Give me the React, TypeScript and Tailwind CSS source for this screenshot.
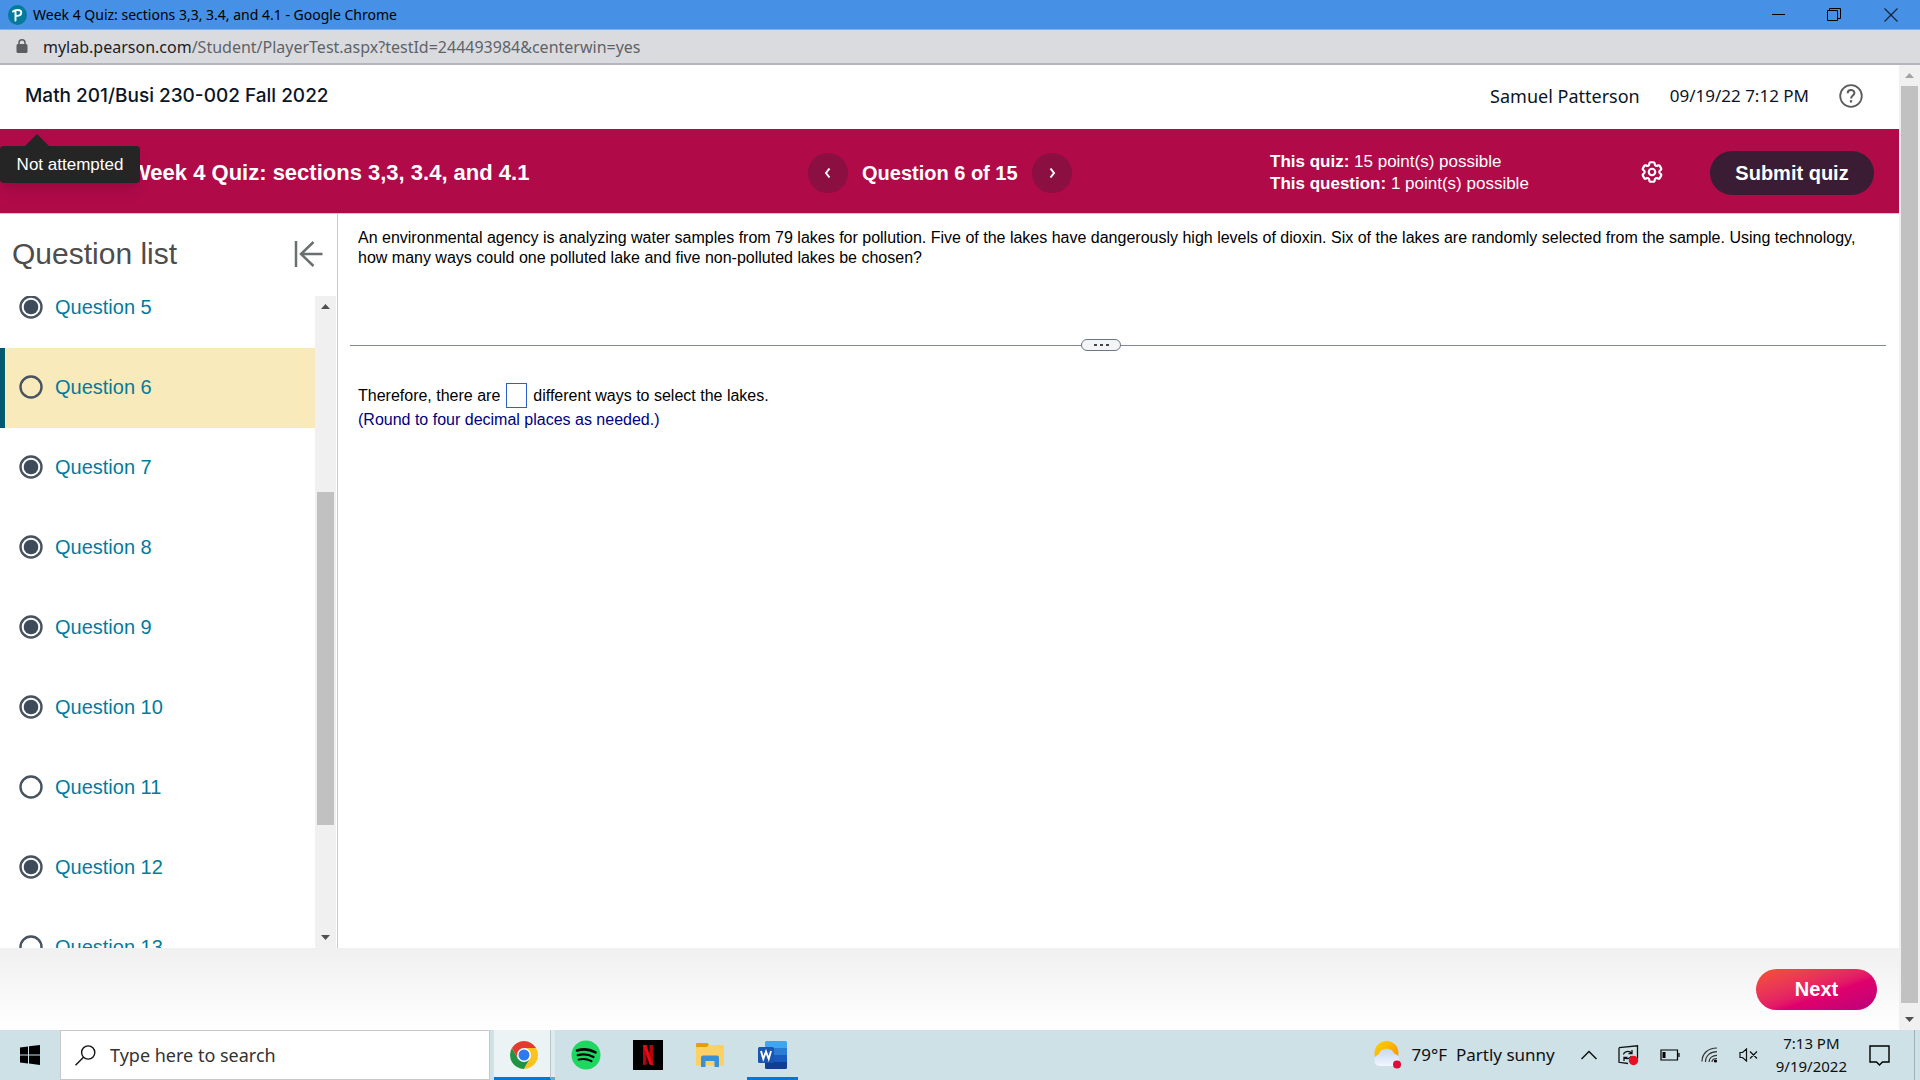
import clsx from "clsx";
import { HiOutlineCog6Tooth } from "react-icons/hi2";

const questions = [
    { number: 5, answered: true },
    { number: 6, answered: false },
    { number: 7, answered: true },
    { number: 8, answered: true },
    { number: 9, answered: true },
    { number: 10, answered: true },
    { number: 11, answered: false },
    { number: 12, answered: true },
    { number: 13, answered: false },
];

const current = 6;

function TitleBar() {
    return (
        <header className="flex h-[30px] shrink-0 items-center justify-between border-b border-[#a5a8ae] bg-[#4690e6] pl-2">
            <div className="flex items-center gap-1.5">
                <svg width="19" height="20" viewBox="0 0 19 20">
                    <ellipse cx="9.5" cy="10" rx="9.5" ry="10" fill="#047a9c" />
                    <path d="M7.5 15.5V6.5M5 6.5C7 4.6 13.3 4 13.3 7.6c0 2.6-2.6 3.5-4.6 3.2" fill="none" stroke="#fff" strokeWidth="1.9" strokeLinecap="round" />
                </svg>
                <h1 className="text-sm text-black">Week 4 Quiz: sections 3,3, 3.4, and 4.1 - Google Chrome</h1>
            </div>
            <div className="flex">
                <button aria-label="Minimize" className="flex h-7 w-14 items-center justify-center">
                    <svg width="13" height="13" viewBox="0 0 13 13"><path d="M0 6.5h13" stroke="#000" /></svg>
                </button>
                <button aria-label="Restore" className="flex h-7 w-14 items-center justify-center">
                    <svg width="14" height="13" viewBox="0 0 14 13" fill="none" stroke="#000">
                        <path d="M.5 2.5h10v10H.5zM2.5 2.5v-2h11v10h-3" />
                    </svg>
                </button>
                <button aria-label="Close" className="flex h-7 w-[58px] items-center justify-center">
                    <svg width="14" height="14" viewBox="0 0 14 14"><path d="M.5.5l13 13M13.5.5l-13 13" stroke="#12233a" strokeWidth="1.2" /></svg>
                </button>
            </div>
        </header>
    );
}

function AddressBar() {
    return (
        <div className="flex h-[35px] shrink-0 items-center gap-[15px] border-b-2 border-[#b4b6bf] bg-[#dadbdf] pl-4">
            <svg width="12" height="15" viewBox="0 0 12 15">
                <rect x="0.5" y="5" width="11" height="9" rx="1.5" fill="#5a5d61" />
                <path d="M3 6V3.8a3 3 0 0 1 6 0V6" fill="none" stroke="#5a5d61" strokeWidth="1.5" />
            </svg>
            <p className="text-base text-[#5f6368]">
                <span className="text-[#202124]">mylab.pearson.com</span>/Student/PlayerTest.aspx?testId=244493984&amp;centerwin=yes
            </p>
        </div>
    );
}

function CourseHeader() {
    return (
        <div className="flex h-16 shrink-0 items-center justify-between pr-9 pb-0.5 pl-[25px] text-[#0b1526]">
            <h2 className="font-['Inter',sans-serif] text-[19px] font-medium">Math 201/Busi 230-002 Fall 2022</h2>
            <div className="flex items-center gap-[30px]">
                <span className="text-lg">Samuel Patterson</span>
                <span className="text-[17px]">09/19/22 7:12 PM</span>
                <button aria-label="Help">
                    <svg width="24" height="24" viewBox="0 0 24 24" fill="none" stroke="#5b5b5b">
                        <circle cx="12" cy="12" r="10.8" strokeWidth="1.8" />
                        <path d="M8.7 9.3c0-4.2 6.7-4.2 6.7-.3 0 2.5-3.3 2.5-3.3 5.4" strokeWidth="2" />
                        <path d="M12 16.2v2.3" strokeWidth="2.3" />
                    </svg>
                </button>
            </div>
        </div>
    );
}

function StepButton({ label, path }: { label: string; path: string }) {
    return (
        <button aria-label={label} className="flex h-10 w-10 items-center justify-center rounded-full bg-[#8b0f41]">
            <svg width="10" height="12" viewBox="0 0 10 12" fill="none" stroke="#fff" strokeWidth="2">
                <path d={path} />
            </svg>
        </button>
    );
}

function QuizBar() {
    return (
        <div className="relative grid h-[85px] shrink-0 grid-cols-[808fr_462fr_629fr] items-center border-b border-[#d0c4d0] bg-[#b00a49] pt-[3px] text-white">
            <h2 className="pl-[130px] text-[22px] font-bold">Week 4 Quiz: sections 3,3, 3.4, and 4.1</h2>
            <div className="flex items-center gap-3.5">
                <StepButton label="Previous question" path="M6.5 1.5L3 6l3.5 4.5" />
                <span className="text-xl font-bold">Question 6 of 15</span>
                <StepButton label="Next question" path="M3.5 1.5L7 6l-3.5 4.5" />
            </div>
            <div className="flex items-center justify-between pr-[25px]">
                <div className="text-[17px] leading-[22px]">
                    <p><b>This quiz:</b> 15 point(s) possible</p>
                    <p><b>This question:</b> 1 point(s) possible</p>
                </div>
                <div className="flex items-center gap-[45px]">
                    <button aria-label="Settings" className="pb-0.5">
                        <HiOutlineCog6Tooth className="h-[26px] w-[26px] stroke-2" />
                    </button>
                    <button className="h-11 w-[164px] rounded-[22px] bg-[#3a1d35] text-xl font-bold">Submit quiz</button>
                </div>
            </div>

            {/* tooltip for the question status icon */}
            <div role="tooltip" className="absolute top-[5px] left-0">
                <svg className="ml-[25px] block" width="24" height="12" viewBox="0 0 24 12">
                    <path d="M12 0l12 12H0z" fill="#252525" />
                </svg>
                <div className="flex h-[37px] w-[140px] items-center justify-center rounded bg-[#252525] text-[17px] shadow-lg">
                    Not attempted
                </div>
            </div>
        </div>
    );
}

function StatusIcon({ answered }: { answered: boolean }) {
    return (
        <svg width="24" height="24" viewBox="0 0 24 24">
            <circle cx="12" cy="12" r="10.5" fill="none" stroke="#47535f" strokeWidth="2.4" />
            {answered && <circle cx="12" cy="12" r="7.3" fill="#3d4b5a" />}
        </svg>
    );
}

function ScrollArrow({ up, color }: { up?: boolean; color: string }) {
    return (
        <svg className="shrink-0" width="21" height="21" viewBox="0 0 21 21">
            <path d={up ? "M6 13l4.5-5 4.500 5z" : "M6 8l4.5 5 4.500-5z"} fill={color} />
        </svg>
    );
}

function QuestionList() {
    return (
        <aside className="flex w-[338px] shrink-0 flex-col border-r border-[#c9c9d4]">
            <div className="flex h-[82px] shrink-0 items-center justify-between pr-[14px] pb-0.5 pl-3">
                <h2 className="text-3xl text-[#4d4d4d]">Question list</h2>
                <button aria-label="Collapse question list">
                    <svg width="29" height="26" viewBox="0 0 29 26" fill="none" stroke="#6a7070" strokeWidth="2.5">
                        <path d="M2 0v26M28.500 13H7M19.500 1L7 13l12.500 12" />
                    </svg>
                </button>
            </div>
            <div className="flex min-h-0 grow">
                <ul className="min-h-0 grow overflow-hidden">
                    {questions.map((q, i) => (
                        <li
                            key={q.number}
                            className={clsx(
                                "flex h-20 items-center gap-3 border-l-[5px] pb-0.5 pl-3.5",
                                i === 0 && "-mt-7",
                                q.number === current ? "border-[#005a70] bg-[#f8eabb]" : "border-transparent"
                            )}
                        >
                            <StatusIcon answered={q.answered} />
                            <a href={`#question-${q.number}`} className="text-xl text-[#047a9c]">
                                Question {q.number}
                            </a>
                        </li>
                    ))}
                </ul>
                <div className="mr-px flex w-[21px] shrink-0 flex-col items-center bg-[#f0f0f0]">
                    <ScrollArrow up color="#505050" />
                    <div className="flex w-[17px] grow flex-col">
                        <div className="grow-[175]" />
                        <div className="grow-[333] bg-[#c1c1c1]" />
                        <div className="grow-[102]" />
                    </div>
                    <ScrollArrow color="#505050" />
                </div>
            </div>
        </aside>
    );
}

function QuestionBody() {
    return (
        <main className="min-w-0 grow pt-3.5 pr-[13px] pl-3 text-base leading-5 text-black">
            <p className="min-h-[111px] pr-2 pl-2">
                An environmental agency is analyzing water samples from 79 lakes for pollution. Five of the lakes have dangerously
                high levels of dioxin. Six of the lakes are randomly selected from the sample. Using technology, how many ways
                could one polluted lake and five non-polluted lakes be chosen?
            </p>
            <div className="flex h-3 items-center">
                <div className="h-px grow-[731] bg-[#8087a0]" />
                <button aria-label="Resize panels" className="flex h-3 w-10 items-center justify-center gap-[3px] rounded-full border border-[#6a7788] bg-[#f3f4f6]">
                    <span className="h-0.5 w-[3px] bg-[#444]" />
                    <span className="h-0.5 w-[3px] bg-[#444]" />
                    <span className="h-0.5 w-[3px] bg-[#444]" />
                </button>
                <div className="h-px grow-[764] bg-[#8087a0]" />
            </div>
            <div className="pt-8 pl-2">
                <label className="flex items-center gap-1.5">
                    Therefore, there are
                    <input type="text" aria-label="Number of ways" className="h-[25px] w-[21px] border border-[#2a63c8] bg-white" />
                    different ways to select the lakes.
                </label>
                <p className="pt-0.5 text-[#000080]">(Round to four decimal places as needed.)</p>
            </div>
        </main>
    );
}

function PageScrollbar() {
    return (
        <div className="flex w-[21px] shrink-0 flex-col items-center bg-[#f0f0f0]">
            <ScrollArrow up color="#a3a3a3" />
            <div className="flex w-[17px] grow flex-col">
                <div className="grow-[917] bg-[#c1c1c1]" />
                <div className="grow-[6]" />
            </div>
            <ScrollArrow color="#505050" />
        </div>
    );
}

function ChromeIcon() {
    return (
        <svg width="28" height="28" viewBox="0 0 28 28">
            <path d="M1.9 7A14 14 0 0 0 14 28l6.1-10.5L14 14 7.9 17.5z" fill="#229342" />
            <path d="M14 7h12.1A14 14 0 0 1 14 28l6.1-10.5z" fill="#fcc31e" />
            <path d="M1.9 7A14 14 0 0 1 26.1 7H14L7.9 17.500z" fill="#e33b2e" />
            <circle cx="14" cy="14" r="7" fill="#fff" />
            <circle cx="14" cy="14" r="5.5" fill="#2f78f0" />
        </svg>
    );
}

function SpotifyIcon() {
    return (
        <svg width="30" height="30" viewBox="0 0 30 30" fill="none" stroke="#000" strokeLinecap="round">
            <circle cx="15" cy="15" r="14.5" fill="#1ed760" stroke="none" />
            <path d="M6 10.5c6-1.8 13-1.2 18.5 1.8" strokeWidth="2.6" />
            <path d="M6.8 15.2c5.5-1.5 11-.8 15.7 1.8" strokeWidth="2.3" />
            <path d="M7.5 19.6c4.5-1.1 9-.5 13 1.6" strokeWidth="1.9" />
        </svg>
    );
}

function NetflixIcon() {
    return (
        <svg width="30" height="30" viewBox="0 0 30 30">
            <rect width="30" height="30" />
            <path d="M10 5h3.5v19.5L10 25zM16.5 5H20v20l-3.5-.5z" fill="#b1060f" />
            <path d="M10 5h3.5L20 25l-3.5-.5z" fill="#e50914" />
        </svg>
    );
}

function FolderIcon() {
    return (
        <svg width="28" height="24" viewBox="0 0 28 24">
            <path d="M0 1.2Q0 0 1.2 0H11.5L13 1.5 11.5 4H0z" fill="#e2a00f" />
            <path d="M0 4h11l2-2h13.8Q28 2 28 3.2V22.5H0z" fill="#fdd063" />
            <path d="M5 24V14.5Q5 12.5 7 12.5H21Q23 12.5 23 14.5V24H18.5V18h-9v6z" fill="#3a8fd8" />
        </svg>
    );
}

function WordIcon() {
    return (
        <svg width="30" height="28" viewBox="0 0 30 28">
            <path d="M7 1.5Q7 0 8.5 0h19Q29 0 29 1.5V7H7z" fill="#41a5ee" />
            <path d="M7 7h22v7H7z" fill="#2b7cd3" />
            <path d="M7 14h22v7H7z" fill="#185abd" />
            <path d="M7 21h22v5.5q0 1.5-1.5 1.5h-19Q7 28 7 26.5z" fill="#103f91" />
            <rect y="6" width="16" height="16" rx="1.5" fill="#1a55b0" />
            <path d="M3 10l2.3 8L8 10.5 10.7 18 13 10" fill="none" stroke="#fff" strokeWidth="1.9" />
        </svg>
    );
}

function WeatherIcon() {
    return (
        <svg width="28" height="30" viewBox="0 0 28 30">
            <defs>
                <linearGradient id="sun" x1="0" y1="0" x2="1" y2="1">
                    <stop offset="0" stopColor="#ffd400" />
                    <stop offset="1" stopColor="#f58a0b" />
                </linearGradient>
                <linearGradient id="cloud" x1="0" y1="0" x2="0" y2="1">
                    <stop offset="0" stopColor="#c5d8f5" />
                    <stop offset="1" stopColor="#f2f6fd" />
                </linearGradient>
            </defs>
            <circle cx="13.5" cy="13" r="12" fill="url(#sun)" />
            <path d="M6 26a6 6 0 0 1-.5-11.5 8.5 8.5 0 0 1 15.800-.7A6.300 6.300 0 0 1 21.500 26z" fill="url(#cloud)" />
            <circle cx="24" cy="24.500" r="4" fill="#dc0d37" />
        </svg>
    );
}

function Tray() {
    return (
        <div className="flex items-center text-[#101010]">
            <button className="flex items-center gap-[11px] text-[17px]">
                <WeatherIcon />
                <span className="whitespace-pre">79°F  Partly sunny</span>
            </button>
            <div className="ml-[26px] flex items-center gap-[21px]">
                <button aria-label="Show hidden icons">
                    <svg width="16" height="10" viewBox="0 0 16 10" fill="none" stroke="#111" strokeWidth="1.5"><path d="M.5 9L8 1.5 15.5 9" /></svg>
                </button>
                <button aria-label="Windows Update">
                    <svg width="21" height="21" viewBox="0 0 21 21" fill="none" stroke="#111" strokeWidth="1.3">
                        <path d="M1 2.7L19.5.8v13M1 2.7v14.600l9 1.200" />
                        <path d="M5.500 9.500c.5-3 5.500-4.300 8-1.500M14 5v3.500h-3.500M13.500 11c-2 3-5 3.500-7.500 1.500M6 16v-3.700h3.500" />
                        <circle cx="15.500" cy="15.500" r="4.700" fill="#e81123" stroke="none" />
                    </svg>
                </button>
                <button aria-label="Battery">
                    <svg width="20" height="12" viewBox="0 0 20 12" fill="none" stroke="#000" strokeWidth="1.2">
                        <path d="M1 1h16.500v10H1zM19 4v4" />
                        <path d="M4 3v6" strokeWidth="3" />
                    </svg>
                </button>
                <button aria-label="Wi-Fi">
                    <svg width="17" height="16" viewBox="0 0 17 16" fill="none" stroke="#333" strokeWidth="1.2">
                        <path d="M1 14.500C1 6.500 7 1 16 1M4.500 15C4.500 8.500 9.500 4.700 16 4.700M8 15c0-4 3.500-6.700 8-6.700M11 15c0-2 2-3.500 5-3.500" />
                        <circle cx="14.500" cy="14" r="1.600" fill="#000" stroke="none" />
                    </svg>
                </button>
                <button aria-label="Volume muted">
                    <svg width="19" height="14" viewBox="0 0 19 14" fill="none" stroke="#111" strokeWidth="1.2">
                        <path d="M1 4.500h2.500L7.500 1v12L3.500 9.500H1zM11 3.500l7 7M18 3.500l-7 7" />
                    </svg>
                </button>
            </div>
            <div className="ml-[18px] text-center text-[15px] leading-[23px]">
                <p>7:13 PM</p>
                <p>9/19/2022</p>
            </div>
            <button aria-label="Notifications" className="mr-6 ml-[22px]">
                <svg width="21" height="21" viewBox="0 0 21 21" fill="none" stroke="#000" strokeWidth="1.4">
                    <path d="M1 1h19v16h-6.500L10.500 20l-3-3H1z" />
                </svg>
            </button>
            <div className="mr-[5px] h-[50px] w-px bg-[#9fb4ba]" />
        </div>
    );
}

function Taskbar() {
    return (
        <footer className="flex h-[50px] shrink-0 items-center justify-between bg-[#cde1e6]">
            <div className="flex h-full items-center">
                <button aria-label="Start" className="flex w-[60px] items-center justify-center">
                    <svg width="20" height="20" viewBox="0 0 20 20">
                        <path d="M0 2.5l8-1v8H0zM9 1.3L20 0v9.5H9zM0 10.5h8v8l-8-1zM9 10.5h11V20L9 18.6z" />
                    </svg>
                </button>
                <label className="flex h-full w-[430px] items-center gap-[14px] border border-[#c5c7c9] bg-white pl-[14px]">
                    <svg width="21" height="21" viewBox="0 0 21 21" fill="none" stroke="#111" strokeWidth="1.4">
                        <circle cx="13.2" cy="7.5" r="6.6" />
                        <path d="M8.5 12.2L.5 20.2" />
                    </svg>
                    <input type="text" aria-label="Search" placeholder="Type here to search" className="grow text-lg outline-none placeholder:text-[#333]" />
                </label>
                <button aria-label="Google Chrome" className="ml-1 flex h-full w-[57px] items-center justify-center border-r border-b-[3px] border-r-[#b5c8cd] border-b-[#0078d7] bg-[#ebf3f5] pt-[3px] pl-[3px]">
                    <ChromeIcon />
                </button>
                <div className="h-full w-1 border-b-[3px] border-[#5fa8e0] bg-[#deebee]" />
                <button aria-label="Spotify" className="flex w-[62px] items-center justify-center">
                    <SpotifyIcon />
                </button>
                <button aria-label="Netflix" className="flex w-[62px] items-center justify-center">
                    <NetflixIcon />
                </button>
                <button aria-label="File Explorer" className="flex w-[62px] items-center justify-center">
                    <FolderIcon />
                </button>
                <button aria-label="Word" className="ml-1.5 flex h-full w-[51px] items-center justify-center border-b-[3px] border-[#0078d7] pt-[3px]">
                    <WordIcon />
                </button>
            </div>
            <Tray />
        </footer>
    );
}

export default function App() {
    return (
        <div className="flex h-screen flex-col overflow-hidden bg-white font-['Noto_Sans',sans-serif]">
            <TitleBar />
            <AddressBar />
            <div className="flex min-h-0 grow">
                <div className="flex min-w-0 grow flex-col">
                    <CourseHeader />
                    <div className="flex min-h-0 grow flex-col font-['Liberation_Sans',Arial,sans-serif]">
                        <QuizBar />
                        <div className="flex min-h-0 grow">
                            <QuestionList />
                            <QuestionBody />
                        </div>
                        <div className="flex h-[82px] shrink-0 items-center justify-end bg-linear-to-b from-[#f0f0f0] to-white pr-[22px]">
                            <button className="h-[41px] w-[121px] rounded-full bg-linear-to-br from-[#f5512f] via-[#e0006c] via-60% to-[#b8007a] text-xl font-bold text-white">
                                Next
                            </button>
                        </div>
                    </div>
                </div>
                <PageScrollbar />
            </div>
            <Taskbar />
        </div>
    );
}
